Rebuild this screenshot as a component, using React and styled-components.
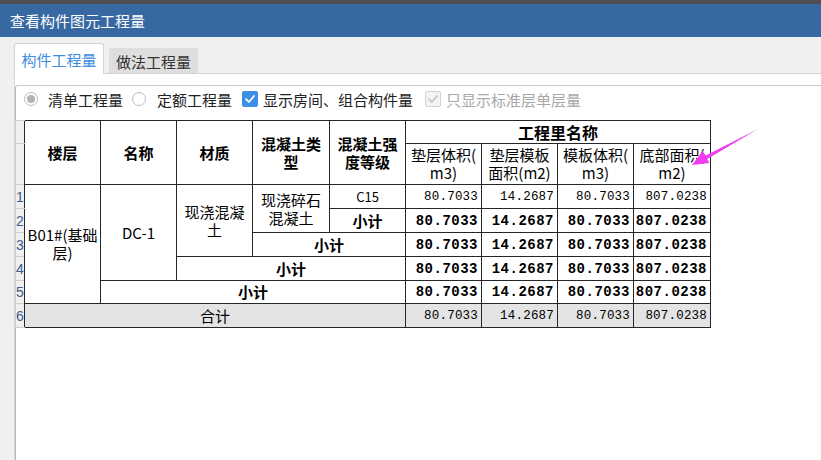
import React from "react";
import styled, { createGlobalStyle } from "styled-components";

const GlobalStyle = createGlobalStyle`
  html, body { margin: 0; padding: 0; }
  body {
    font-family: "Noto Sans CJK SC", "Noto Sans", sans-serif;
    background: #f0f0f0;
  }
`;

const Window = styled.div`
  position: relative;
  width: 821px;
  height: 460px;
  display: flex;
  flex-direction: column;
  overflow: hidden;
  background: #f0f0f0;
`;

const TopStrip = styled.div`
  height: 4px;
  background: #4f4f4f;
  flex: none;
`;

const TitleBar = styled.div`
  height: 33px;
  flex: none;
  background: #3868a2;
  color: #ffffff;
  font-size: 15px;
  display: flex;
  align-items: center;
  padding-left: 10px;
`;

const Body = styled.div`
  flex: 1;
  display: flex;
  flex-direction: column;
  padding: 6px 0 0 14px;
  min-height: 0;
`;

const Tabs = styled.div`
  display: flex;
  align-items: flex-end;
  gap: 5px;
  height: 30px;
  flex: none;
`;

const Tab = styled.div`
  box-sizing: border-box;
  width: ${(p) => (p.$active ? "90px" : "89px")};
  height: ${(p) => (p.$active ? "31px" : "25px")};
  margin-bottom: ${(p) => (p.$active ? "-1px" : "0")};
  position: relative;
  z-index: ${(p) => (p.$active ? 2 : 1)};
  display: flex;
  align-items: center;
  justify-content: center;
  font-size: 15px;
  color: ${(p) => (p.$active ? "#3b8be0" : "#333333")};
  background: ${(p) => (p.$active ? "#ffffff" : "#dedede")};
  border: 1px solid ${(p) => (p.$active ? "#d4d4d4" : "#dedede")};
  border-bottom: none;
  border-radius: 3px 3px 0 0;
`;

const Panel = styled.div`
  flex: 1;
  background: #ffffff;
  border-top: 1px solid #d4d4d4;
  border-left: 1px solid #d8d8d8;
  padding-top: 11px;
  display: flex;
  flex-direction: column;
`;

const Inner = styled.div`
  flex: 1;
  border-top: 1px solid #c8c8c8;
  border-left: 1px solid #b8b8b8;
  border-top-left-radius: 3px;
  display: flex;
  flex-direction: column;
`;

const Options = styled.div`
  height: 26px;
  display: flex;
  align-items: center;
  padding-left: 8px;
  font-size: 15px;
  color: #222222;
`;

const Option = styled.div`
  display: flex;
  align-items: center;
  gap: ${(p) => p.$gap}px;
  margin-right: ${(p) => p.$mr}px;
  color: ${(p) => (p.$disabled ? "#a8a8a8" : "#222222")};
`;

const Radio = styled.span`
  box-sizing: border-box;
  width: 14px;
  height: 14px;
  border-radius: 50%;
  border: 1px solid #bdbdbd;
  background: #ffffff;
  display: flex;
  align-items: center;
  justify-content: center;
  &::after {
    content: "";
    width: 8px;
    height: 8px;
    border-radius: 50%;
    background: ${(p) => (p.$checked ? "#b3b3b3" : "transparent")};
  }
`;

const Check = styled.span`
  box-sizing: border-box;
  width: 16px;
  height: 16px;
  border-radius: 2px;
  display: flex;
  align-items: center;
  justify-content: center;
  background: ${(p) => (p.$disabled ? "#f4f4f4" : "#3d8ee6")};
  border: 1px solid ${(p) => (p.$disabled ? "#d2d2d2" : "#3d8ee6")};
`;

const TableWrap = styled.div`
  margin-top: 8px;
  margin-left: -1px;
`;

const Grid = styled.table`
  border-collapse: collapse;
  table-layout: fixed;
  width: 695px;
  font-size: 15px;
  line-height: 18px;
  color: #000000;
`;

const Cell = styled.td`
  border: 1px solid #262626;
  padding: 0;
  text-align: ${(p) => p.$align || "center"};
  vertical-align: middle;
  font-weight: ${(p) => (p.$bold ? 700 : 400)};
  font-size: ${(p) => p.$size || 15}px;
  background: ${(p) => (p.$grey ? "#e4e4e4" : "#ffffff")};
  white-space: nowrap;
  overflow: hidden;
`;

const Num = styled(Cell)`
  font-family: "Liberation Mono", monospace;
  text-align: right;
  padding-right: 3px;
  font-size: ${(p) => (p.$bold ? 14 : 12.5)}px;
  letter-spacing: ${(p) => (p.$bold ? 0.5 : 0.2)}px;
`;

const RowNo = styled.td`
  border: 1px solid #cfcfcf;
  border-right: none;
  background: #f0f0f0;
  padding: 0;
  font-family: "Liberation Sans", sans-serif;
  font-size: 14px;
  line-height: 16px;
  color: #3c5c8c;
  text-align: left;
  vertical-align: middle;
  white-space: nowrap;
`;

const Row = styled.tr`
  height: ${(p) => p.$h}px;
`;

const Overlay = styled.svg`
  position: absolute;
  left: 0;
  top: 0;
  pointer-events: none;
`;

const CheckMark = ({ color }) => (
  <svg width="12" height="12" viewBox="0 0 12 12">
    <path d="M2 6.2 L5 9 L10 3" fill="none" stroke={color} strokeWidth="1.8" strokeLinecap="round" strokeLinejoin="round" />
  </svg>
);

const values = ["80.7033", "14.2687", "80.7033", "807.0238"];

const Nums = ({ bold, grey }) =>
  values.map((v, i) => (
    <Num key={i} $bold={bold} $grey={grey}>
      {v}
    </Num>
  ));

export default function App() {
  return (
    <>
      <GlobalStyle />
      <Window>
        <TopStrip />
        <TitleBar>查看构件图元工程量</TitleBar>
        <Body>
          <Tabs>
            <Tab $active>构件工程量</Tab>
            <Tab>做法工程量</Tab>
          </Tabs>
          <Panel>
            <Inner>
              <Options>
                <Option $gap={10} $mr={9}>
                  <Radio $checked />
                  <span>清单工程量</span>
                </Option>
                <Option $gap={11} $mr={10}>
                  <Radio />
                  <span>定额工程量</span>
                </Option>
                <Option $gap={5} $mr={12}>
                  <Check>
                    <CheckMark color="#ffffff" />
                  </Check>
                  <span>显示房间、组合构件量</span>
                </Option>
                <Option $gap={5} $mr={0} $disabled>
                  <Check $disabled>
                    <CheckMark color="#c6c6c6" />
                  </Check>
                  <span>只显示标准层单层量</span>
                </Option>
              </Options>
              <TableWrap>
                <Grid>
                  <colgroup>
                    <col style={{ width: 9 }} />
                    <col style={{ width: 76 }} />
                    <col style={{ width: 76 }} />
                    <col style={{ width: 76 }} />
                    <col style={{ width: 77 }} />
                    <col style={{ width: 76 }} />
                    <col style={{ width: 76 }} />
                    <col style={{ width: 76 }} />
                    <col style={{ width: 76 }} />
                    <col style={{ width: 77 }} />
                  </colgroup>
                  <tbody>
                    <Row $h={23}>
                      <RowNo />
                      <Cell rowSpan={2} $bold>楼层</Cell>
                      <Cell rowSpan={2} $bold>名称</Cell>
                      <Cell rowSpan={2} $bold>材质</Cell>
                      <Cell rowSpan={2} $bold>混凝土类<br />型</Cell>
                      <Cell rowSpan={2} $bold>混凝土强<br />度等级</Cell>
                      <Cell colSpan={4} $bold $size={16}>工程里名称</Cell>
                    </Row>
                    <Row $h={41}>
                      <RowNo />
                      <Cell>垫层体积(<br />m3)</Cell>
                      <Cell>垫层模板<br />面积(m2)</Cell>
                      <Cell>模板体积(<br />m3)</Cell>
                      <Cell>底部面积(<br />m2)</Cell>
                    </Row>
                    <Row $h={24}>
                      <RowNo>1</RowNo>
                      <Cell rowSpan={5}>B01#(基础<br />层)</Cell>
                      <Cell rowSpan={4}>DC-1</Cell>
                      <Cell rowSpan={3}>现浇混凝<br />土</Cell>
                      <Cell rowSpan={2}>现浇碎石<br />混凝土</Cell>
                      <Cell $size={13}>C15</Cell>
                      <Nums />
                    </Row>
                    <Row $h={24}>
                      <RowNo>2</RowNo>
                      <Cell $bold>小计</Cell>
                      <Nums bold />
                    </Row>
                    <Row $h={24}>
                      <RowNo>3</RowNo>
                      <Cell colSpan={2} $bold>小计</Cell>
                      <Nums bold />
                    </Row>
                    <Row $h={24}>
                      <RowNo>4</RowNo>
                      <Cell colSpan={3} $bold>小计</Cell>
                      <Nums bold />
                    </Row>
                    <Row $h={23}>
                      <RowNo>5</RowNo>
                      <Cell colSpan={4} $bold>小计</Cell>
                      <Nums bold />
                    </Row>
                    <Row $h={24}>
                      <RowNo>6</RowNo>
                      <Cell colSpan={5} $grey>合计</Cell>
                      <Nums grey />
                    </Row>
                  </tbody>
                </Grid>
              </TableWrap>
            </Inner>
          </Panel>
        </Body>
        <Overlay width="821" height="460" viewBox="0 0 821 460">
          <polygon
            points="758,129 705.8,155.6 702.6,151 692,165 709.4,163 707.2,159"
            fill="#f23cf2"
          />
        </Overlay>
      </Window>
    </>
  );
}
